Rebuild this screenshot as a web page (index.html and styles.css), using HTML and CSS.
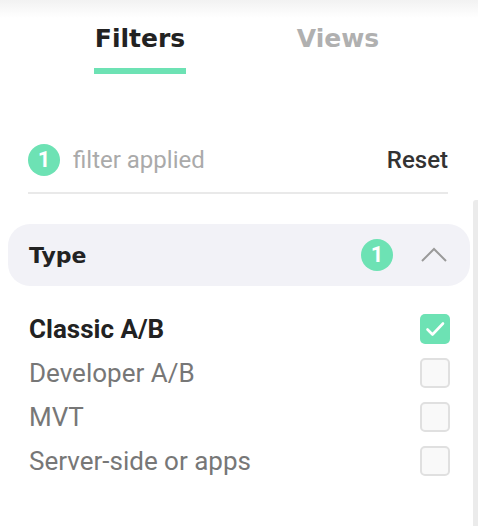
FILE: index.html
```html
<!DOCTYPE html>
<html>
<head>
<meta charset="utf-8">
<link rel="stylesheet" href="styles.css">
</head>
<body>
<div class="panel">
  <nav class="tabs">
    <div class="tab active">Filters</div>
    <div class="tab">Views</div>
  </nav>

  <div class="summary">
    <span class="badge">1</span>
    <span class="summary-text">filter applied</span>
    <span class="reset">Reset</span>
  </div>

  <div class="group-head">
    <span class="group-title">Type</span>
    <span class="badge">1</span>
    <svg class="chevron" width="26" height="15" viewBox="0 0 26 15"><polyline points="1,14 13,2 25,14" fill="none" stroke="#9a9a9a" stroke-width="2"/></svg>
  </div>

  <ul class="options">
    <li class="option checked"><span>Classic A/B</span><span class="box on"><svg width="30" height="30" viewBox="0 0 30 30"><polyline points="7.5,15.5 12.5,20.5 23,9.5" fill="none" stroke="#fff" stroke-width="2.6" stroke-linecap="round" stroke-linejoin="round"/></svg></span></li>
    <li class="option"><span>Developer A/B</span><span class="box"></span></li>
    <li class="option"><span>MVT</span><span class="box"></span></li>
    <li class="option"><span>Server-side or apps</span><span class="box"></span></li>
  </ul>
  <div class="scrollbar"></div>
</div>
</body>
</html>
```
FILE: styles.css
```css
html, body {
  margin: 0;
  padding: 0;
  background: #fff;
}
.panel {
  position: relative;
  width: 478px;
  height: 526px;
  overflow: hidden;
  font-family: Roboto, "Liberation Sans", sans-serif;
  background: linear-gradient(#f2f2f2 0, #ffffff 18px) no-repeat;
}
.tabs {
  display: flex;
  gap: 106px;
  padding: 24px 0 0 94px;
}
.tab {
  width: 92px;
  text-align: center;
  font-family: "DejaVu Sans", sans-serif;
  font-weight: 700;
  font-size: 25px;
  line-height: 30px;
  color: #b0b0b0;
  white-space: nowrap;
  padding-bottom: 14px;
  border-bottom: 6px solid transparent;
}
.tab.active {
  color: #222;
  border-bottom-color: #6de2b4;
}
.summary {
  display: flex;
  align-items: center;
  margin: 70px 30px 0 28px;
  padding-bottom: 16px;
  border-bottom: 2px solid #e9e9e9;
}
.badge {
  width: 32px;
  height: 32px;
  border-radius: 50%;
  background: #6de2b4;
  color: #fff;
  font-weight: 700;
  font-size: 22px;
  line-height: 32px;
  text-align: center;
  flex: none;
}
.summary-text {
  margin-left: 13px;
  font-size: 24px;
  color: #aaaaaa;
}
.reset {
  margin-left: auto;
  font-size: 24px;
  font-weight: 500;
  color: #333;
}
.group-head {
  display: flex;
  align-items: center;
  height: 62px;
  margin: 30px 8px 0 8px;
  padding: 0 23px 0 21px;
  background: #f2f2f7;
  border-radius: 22px;
}
.group-title {
  font-family: "DejaVu Sans", sans-serif;
  font-weight: 700;
  font-size: 22px;
  color: #222;
  margin-right: auto;
}
.group-head .badge {
  margin-right: 0;
}
.chevron {
  margin-left: 28px;
  margin-top: -2px;
}
.options {
  list-style: none;
  margin: 28px 28px 0 29px;
  padding: 0;
  display: flex;
  flex-direction: column;
  gap: 14px;
}
.option {
  display: flex;
  align-items: center;
  justify-content: space-between;
  height: 30px;
  font-size: 26px;
  color: #777;
}
.option.checked {
  color: #222;
  font-weight: 700;
}
.box {
  width: 30px;
  height: 30px;
  box-sizing: border-box;
  border: 2px solid #e0e0e0;
  border-radius: 5px;
  background: #f9f9f9;
  flex: none;
}
.box.on {
  border: none;
  background: #6de2b4;
}
.box svg {
  display: block;
}
.scrollbar {
  position: absolute;
  right: 0;
  top: 200px;
  bottom: 0;
  width: 5px;
  background: #ebebeb;
  border-radius: 3px 0 0 0;
}
```
